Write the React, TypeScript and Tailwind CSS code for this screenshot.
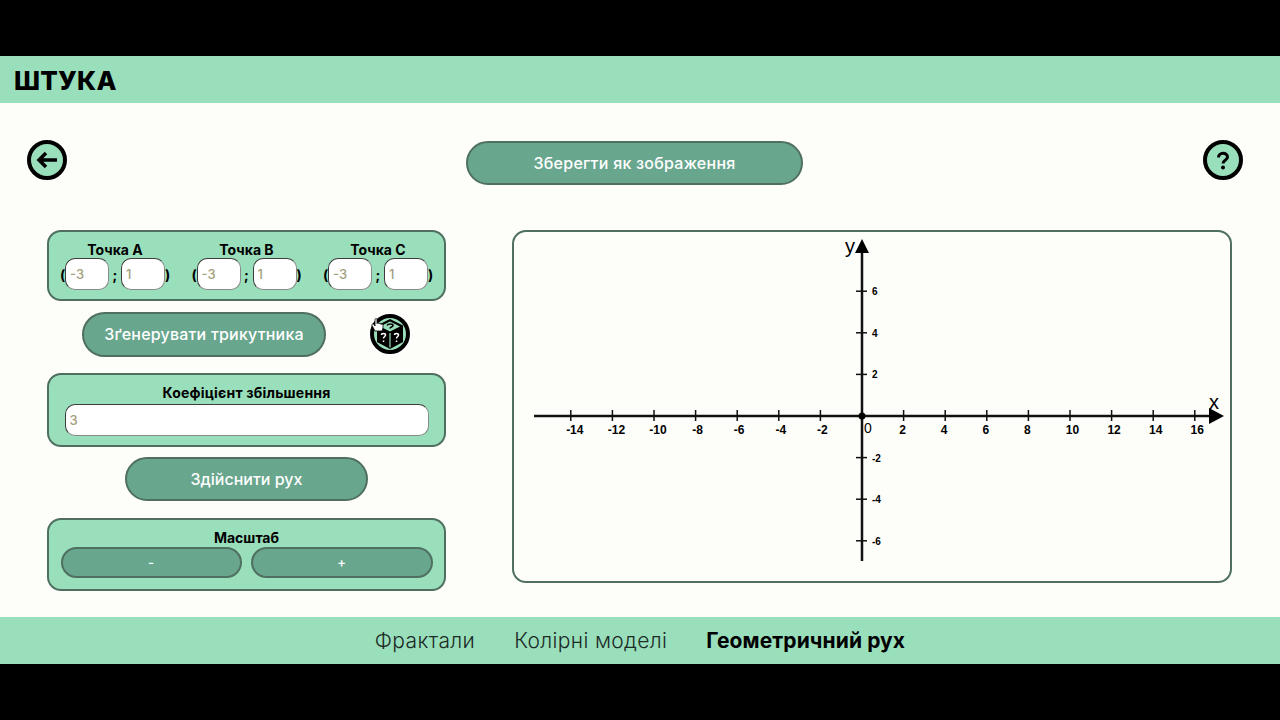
import React from 'react';

const FONT = "font-['Inter','Noto_Sans',sans-serif]";
const PANEL = 'rounded-[14px] border-2 border-[#4f6f60] bg-[#9adfbc]';
const BUTTON =
  'flex items-center justify-center rounded-full border-2 border-[#4f6f60] bg-[#69a68e] text-white';
const FIELD =
  'rounded-[10px] border border-[#3c3c3c] border-b-[#8a8a8a] border-r-[#8a8a8a] bg-white pl-1 text-[13px] font-medium text-[#a3a07c] outline-none';

const POINTS = ['А', 'В', 'С'];
const X_TICKS = [-14, -12, -10, -8, -6, -4, -2, 2, 4, 6, 8, 10, 12, 14, 16];
const Y_TICKS = [6, 4, 2, -2, -4, -6];

// labels on the x axis don't sit exactly under their ticks
function labelShift(t: number) {
  if (t < -9) return 4;
  if (t < 0) return 2;
  return t > 9 ? 2.5 : -1;
}

function PointGroup({ name }: { name: string }) {
  return (
    <div className="flex w-[110px] flex-col items-center">
      <div className="h-[15px] text-[14px] leading-[15px] font-bold text-black">Точка {name}</div>
      <div className="mt-[1px] flex items-center text-[14px] font-bold text-black">
        <span className="w-[5px]">(</span>
        <input readOnly value="-3" className={`h-[32px] w-[44px] ${FIELD}`} />
        <span className="w-[12px] text-center">;</span>
        <input readOnly value="1" className={`h-[32px] w-[44px] ${FIELD}`} />
        <span className="w-[5px] text-right">)</span>
      </div>
    </div>
  );
}

function RoundIcon({ children }: { children: React.ReactNode }) {
  return (
    <svg width="40" height="40" viewBox="0 0 40 40" fill="none">
      <circle cx="20" cy="20" r="18" fill="#9adfbc" stroke="#000" strokeWidth="4" />
      {children}
    </svg>
  );
}

function DiceIcon() {
  return (
    <svg width="46" height="46" viewBox="0 0 46 46" fill="none">
      <circle cx="23" cy="23" r="21.5" fill="#fff" />
      <circle cx="23" cy="23" r="18" fill="#9adfbc" stroke="#000" strokeWidth="4" />
      <path d="M23 8 L36 14.500 L36 31 L23 38 L10 31 L10 14.500 Z" fill="#000" />
      <path d="M23 10.500 L33 15.500 L23 20.500 L13 15.500 Z" fill="#9adfbc" />
      <path d="M23 22V36.500" stroke="#9adfbc" strokeWidth="1.200" />
      <path d="M20 14.500c1-2 6-2 6 0 0 1.500-3 1.500-3 3" stroke="#000" strokeWidth="1.600" />
      <path d="M14.500 24c0-2 4-2 4 0 0 1.500-2 1.500-2 3.500M16.500 29.500v1.500" stroke="#fff" strokeWidth="1.500" />
      <path d="M27.500 24c0-2 4-2 4 0 0 1.500-2 1.500-2 3.500M29.500 29.500v1.500" stroke="#fff" strokeWidth="1.500" />
      <path
        d="M8 20L5 14.500C4.500 13 6 12 7 13.500L8 15V8.500C8 7.200 10 7.200 10 8.500V12.500C10 11.500 12 11.500 12 12.500V13C12 12 14 12 14 13V13.500C14 12.700 16 12.700 16 13.500V17L15 20H8Z"
        fill="#fff"
        stroke="#000"
        strokeWidth="0.800"
      />
    </svg>
  );
}

function Chart() {
  // origin of the axes inside the panel
  const ox = 347;
  const oy = 184;
  const step = 20.8;
  return (
    <svg width="716" height="349" viewBox="-1 0 716 349" fontFamily="'Liberation Sans', Arial, sans-serif" fontWeight="700">
      <path d={`M19 ${oy}H696M${ox} 19V329`} stroke="#111" strokeWidth="2.500" />
      <path d={`M694 ${oy - 8}L709 ${oy}L694 ${oy + 8}Z M${ox} 7L${ox + 7} 21H${ox - 7}Z`} fill="#000" />
      <circle cx={ox} cy={oy} r="3.500" fill="#000" />
      {X_TICKS.map((t) => {
        const x = ox + t * step;
        return (
          <g key={t}>
            <path d={`M${x} ${oy - 6}V${oy + 5}`} stroke="#111" strokeWidth="1.500" />
            <text x={x + labelShift(t)} y={oy + 18} fontSize="12" textAnchor="middle" fill="#000">
              {t}
            </text>
          </g>
        );
      })}
      {Y_TICKS.map((t) => {
        const y = oy - t * step;
        return (
          <g key={t}>
            <path d={`M${ox - 6} ${y}H${ox + 5}`} stroke="#111" strokeWidth="1.500" />
            <text x={ox + 10} y={y + 4} fontSize="10" fill="#000">
              {t}
            </text>
          </g>
        );
      })}
      <text x={ox + 2} y={oy + 17} fontSize="14" fontWeight="400" fill="#000">0</text>
      <text x={330} y={21} fontSize="20" fontWeight="400" fill="#000">y</text>
      <text x={694} y={177} fontSize="20" fontWeight="400" fill="#000">x</text>
    </svg>
  );
}

export default function App() {
  return (
    <div className={`flex h-[720px] w-[1280px] flex-col overflow-hidden bg-black ${FONT}`}>
      <div className="h-[56px] shrink-0" />

      <header className="flex h-[47px] shrink-0 items-center bg-[#9adfbc] pl-[14px] pt-[2px]">
        <h1 className="text-[26px] font-extrabold tracking-[0.2px] text-black">ШТУКА</h1>
      </header>

      <main className="flex flex-1 flex-col bg-[#fdfefa] pl-[27px] pr-[37px]">
        <div className="mt-[37px] flex h-[45px] items-start justify-between">
          <RoundIcon>
            <path d="M30 20H12M19 13L12 20L19 27" stroke="#000" strokeWidth="3.500" />
          </RoundIcon>
          <button className={`ml-[-1px] mt-[1px] h-[44px] w-[337px] text-[16px] font-medium tracking-[0.25px] ${BUTTON}`}>
            Зберегти як зображення
          </button>
          <RoundIcon>
            <path d="M15.500 17.500c0-5.500 9-5.500 9-.5 0 3.500-4.500 3-4.500 6.500" stroke="#000" strokeWidth="3" />
            <circle cx="20" cy="27.500" r="2" fill="#000" />
          </RoundIcon>
        </div>

        <div className="mt-[45px] flex items-start pl-[20px]">
          <div className="flex w-[399px] shrink-0 flex-col">
            <section className={`${PANEL} flex h-[71px] justify-center gap-[21.5px] pt-[10px]`}>
              {POINTS.map((p) => (
                <PointGroup key={p} name={p} />
              ))}
            </section>

            <div className="mt-[10px] flex items-center">
              <button className={`ml-[35px] h-[45px] w-[244px] text-[16px] font-medium tracking-[0.2px] ${BUTTON}`}>
                Зґенерувати трикутника
              </button>
              <div className="ml-[41px]">
                <DiceIcon />
              </div>
            </div>

            <section className={`${PANEL} mt-[16px] flex h-[74px] flex-col items-center pt-[10px]`}>
              <div className="h-[15px] text-[14px] leading-[15px] font-bold tracking-[0.2px] text-black">Коефіцієнт збільшення</div>
              <input readOnly value="3" className={`mt-[4px] h-[32px] w-[364px] ${FIELD}`} />
            </section>

            <button className={`mx-auto mt-[10px] h-[44px] w-[243px] text-[16px] font-medium ${BUTTON}`}>
              Здійснити рух
            </button>

            <section className={`${PANEL} mt-[17px] flex h-[73px] flex-col items-center pt-[10px]`}>
              <div className="h-[15px] text-[14px] leading-[15px] font-bold text-black">Масштаб</div>
              <div className="mt-[2px] flex gap-[9px]">
                <button className={`h-[31px] w-[181px] text-[13px] font-medium ${BUTTON}`}>-</button>
                <button className={`h-[31px] w-[182px] text-[13px] font-medium ${BUTTON}`}>+</button>
              </div>
            </section>
          </div>

          <div className="ml-[66px] h-[353px] w-[720px] shrink-0 rounded-[14px] border-2 border-[#4f6f60] bg-[#fdfefa]">
            <Chart />
          </div>
        </div>
      </main>

      <nav className="flex h-[47px] shrink-0 items-center justify-center gap-[39px] bg-[#9adfbc] text-[21px] font-light tracking-[0.35px] text-[#1c2b26]">
        <span>Фрактали</span>
        <span>Колірні моделі</span>
        <span className="font-bold tracking-[0.1px] text-black">Геометричний рух</span>
      </nav>

      <div className="h-[56px] shrink-0" />
    </div>
  );
}
